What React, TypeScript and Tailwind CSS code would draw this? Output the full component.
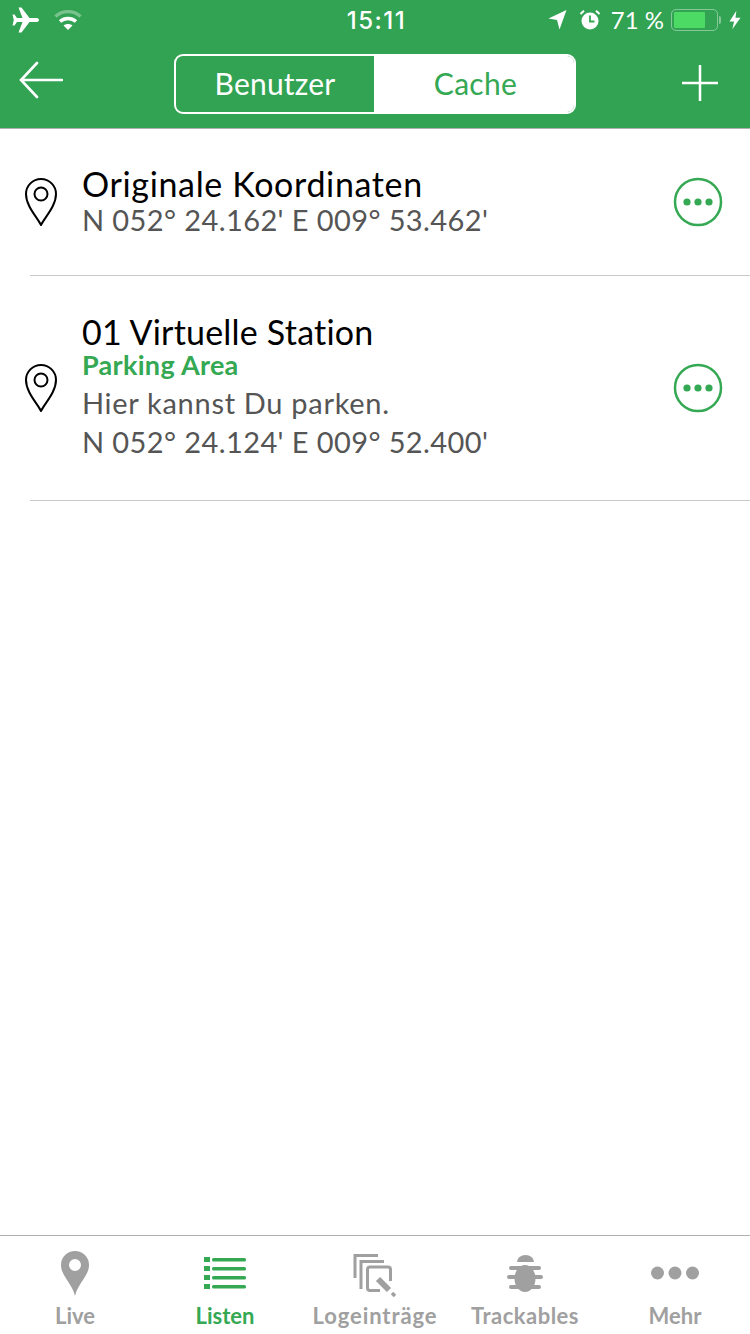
import React from "react";

const font = "font-['Lato','Open_Sans',sans-serif]";

const PinOutline = () => (
  <svg width="34" height="50" viewBox="0 0 34 50" fill="none" stroke="#000" strokeWidth="2">
    <path d="M17 48 C13 40 2 29 2 17 A15 15 0 0 1 32 17 C32 29 21 40 17 48 Z" strokeLinejoin="round" />
    <circle cx="17" cy="17" r="6.5" />
  </svg>
);

const MoreCircle = () => (
  <svg width="50" height="50" viewBox="0 0 50 50" fill="#34a853">
    <circle cx="25" cy="25" r="23" fill="none" stroke="#34a853" strokeWidth="2.5" />
    <circle cx="14" cy="25" r="3.6" />
    <circle cx="25" cy="25" r="3.6" />
    <circle cx="36" cy="25" r="3.6" />
  </svg>
);

const StatusBar = () => (
  <div className="flex h-[40px] items-center justify-between pl-[12px] pr-[9px] text-white">
    <div className="flex items-center gap-[14px]">
      <svg width="28" height="26" viewBox="0 0 28 26" fill="#fff">
        <path d="M27 13 C27 11.6 25.5 11 24 11 L17.5 11 L9.5 0.5 L6.5 0.5 L10.5 11 L5 11 L2.5 7.5 L0.5 7.5 L1.8 13 L0.5 18.5 L2.5 18.5 L5 15 L10.5 15 L6.5 25.5 L9.5 25.5 L17.5 15 L24 15 C25.5 15 27 14.4 27 13 Z" />
      </svg>
      <svg width="28" height="22" viewBox="0 0 28 22" fill="none" stroke="#fff" strokeWidth="3.4">
        <path d="M1.5 7.5 C8.5 1 19.5 1 26.5 7.5" strokeOpacity="0.35" />
        <path d="M6 12.5 C10.5 8.5 17.5 8.5 22 12.5" />
        <path d="M14 21 L9.5 16.5 C12 14.5 16 14.5 18.5 16.5 Z" fill="#fff" stroke="none" />
      </svg>
    </div>
    <div className="absolute top-[7px] left-[3px] right-0 text-center font-['Inter',sans-serif] text-[24px] leading-[28px] font-medium tracking-[1.5px]">15:11</div>
    <div className="flex items-center">
      <svg width="19" height="20" viewBox="0 0 18 20" fill="#fff" className="mr-[13px]">
        <path d="M18 0 L0 8.5 L8.5 10 L11 19.5 Z" />
      </svg>
      <svg width="20" height="20" viewBox="0 0 20 20" className="mr-[11px]">
        <circle cx="10" cy="11" r="8.5" fill="#fff" />
        <path d="M10 5.5 L10 11.5 L14.5 11.5" fill="none" stroke="#34a853" strokeWidth="1.8" />
        <path d="M0.5 4 L4 0.8 M19.5 4 L16 0.8" stroke="#fff" strokeWidth="2" />
      </svg>
      <span className={`${font} mr-[7px] text-[24px] leading-none`}>71 %</span>
      <div className="flex h-[22px] w-[47px] items-center rounded-[5px] border-[1.5px] border-white/40 p-[2px]">
        <div className="h-full w-[31px] rounded-[1px] bg-[#4cd964]" />
      </div>
      <div className="mr-[8px] ml-[1px] h-[8px] w-[2px] rounded-r-sm bg-white/40" />
      <svg width="12" height="20" viewBox="0 0 13 20" fill="#fff">
        <path d="M8 0 L0.5 11.5 L5.5 11.5 L3.5 20 L12.5 7.5 L7 7.5 Z" />
      </svg>
    </div>
  </div>
);

const NavBar = () => (
  <div className="flex h-[88px] items-start justify-between pt-[14px] pr-[32px] pl-[19px]">
    <svg width="44" height="38" viewBox="0 0 44 38" fill="none" stroke="#fff" strokeWidth="2.6" strokeLinecap="round" className="mt-[7px]">
      <path d="M43 19 L2 19 M18 2 L2 19 L18 36" />
    </svg>
    <div className={`${font} ml-[5px] flex h-[60px] w-[402px] overflow-hidden rounded-[9px] border-2 border-white text-[30px]`}>
      <div className="flex w-[198px] items-center justify-center pb-[2px] tracking-[0.2px] text-white">Benutzer</div>
      <div className="flex flex-1 items-center justify-center bg-white pb-[2px] pl-[3px] tracking-[0.3px] text-[#34a853]">Cache</div>
    </div>
    <svg width="36" height="36" viewBox="0 0 36 36" stroke="#fff" strokeWidth="2.5" className="mt-[11px]">
      <path d="M18 0 L18 36 M0 18 L36 18" />
    </svg>
  </div>
);

interface RowProps {
  title: string;
  subtitle?: string;
  description?: string;
  coords: string;
  className: string;
}

const Row: React.FC<RowProps> = ({ title, subtitle, description, coords, className }) => (
  <div className={`flex items-center pr-[27px] pl-[24px] ${className}`}>
    <PinOutline />
    <div className={`${font} ml-[24px] flex-1 ${subtitle ? "" : "pt-[2px]"}`}>
      <div className={`text-[34px] leading-[34px] text-black ${subtitle ? "tracking-[0.2px]" : "tracking-[0.65px]"}`}>{title}</div>
      {subtitle && <div className="text-[27px] leading-[32px] font-bold tracking-[0.3px] text-[#34a853]">{subtitle}</div>}
      {description && <div className="mt-[3px] text-[29px] leading-[38px] tracking-[0.7px] text-[#555]">{description}</div>}
      <div className={`text-[29px] leading-[38px] tracking-[0.4px] text-[#555] ${description ? "mt-[1px]" : ""}`}>{coords}</div>
    </div>
    <MoreCircle />
  </div>
);

const Tab = ({ label, labelClass, icon }: { label: string; labelClass: string; icon: React.ReactNode }) => (
  <div className="flex w-[150px] flex-col items-center">
    <div className="flex h-[48px] items-center justify-center">{icon}</div>
    <div className={`${font} mt-[6px] text-[22px] leading-[26px] font-bold whitespace-nowrap ${labelClass}`}>
      {label}
    </div>
  </div>
);

const TabBar = () => (
  <div className="flex h-[99px] shrink-0 border-t border-[#b0b0b0] bg-white pt-[13px]">
    <Tab
      label="Live"
      labelClass="text-[#a0a0a0]"
      icon={
        <svg width="30" height="46" viewBox="0 0 30 46" fill="#a0a0a0">
          <path fillRule="evenodd" d="M15 46 C12 33 1 26 1 15 A14 14 0 0 1 29 15 C29 26 18 33 15 46 Z M15 9 A6 6 0 1 0 15 21 A6 6 0 1 0 15 9 Z" />
        </svg>
      }
    />
    <Tab
      label="Listen"
      labelClass="text-[#34a853]"
      icon={
        <svg width="42" height="32" viewBox="0 0 42 32" fill="#34a853">
          <rect x="0" y="0" width="6" height="5" />
          <rect x="8" y="1" width="34" height="3.4" rx="1.5" />
          <rect x="0" y="9" width="6" height="5" />
          <rect x="8" y="10" width="34" height="3.4" rx="1.5" />
          <rect x="0" y="18" width="6" height="5" />
          <rect x="8" y="19" width="34" height="3.4" rx="1.5" />
          <rect x="0" y="27" width="6" height="5" />
          <rect x="8" y="28" width="34" height="3.4" rx="1.5" />
        </svg>
      }
    />
    <Tab
      label="Logeinträge"
      labelClass="tracking-[0.9px] text-[#a0a0a0]"
      icon={
        <svg width="44" height="44" viewBox="0 0 44 44" fill="none" stroke="#a0a0a0" strokeWidth="3" className="mt-[6px]">
          <path d="M25 1.5 L2 1.5 L2 24" />
          <path d="M31 7.5 L8 7.5 L8 35" />
          <path d="M27 36.5 L17 36.5 Q14.5 36.5 14.5 34 L14.5 15.5 Q14.5 13 17 13 L35 13 Q37.5 13 37.5 15.5 L37.5 27" />
          <path d="M25 25 L36 36" strokeWidth="6" />
          <path d="M39 39 L42 42" strokeWidth="3.5" />
        </svg>
      }
    />
    <Tab
      label="Trackables"
      labelClass="tracking-[0.5px] text-[#a0a0a0]"
      icon={
        <svg width="36" height="37" viewBox="0 0 36 37" fill="#a0a0a0">
          <path d="M10 7 A8.5 7 0 0 1 27 7 Z" />
          <ellipse cx="18" cy="23.5" rx="10.5" ry="13.5" />
          <rect x="2" y="11" width="32" height="4" rx="2" />
          <rect x="0" y="20" width="36" height="4" rx="2" />
          <rect x="2" y="30" width="32" height="4" rx="2" />
        </svg>
      }
    />
    <Tab
      label="Mehr"
      labelClass="text-[#a0a0a0]"
      icon={
        <svg width="48" height="14" viewBox="0 0 48 14" fill="#a0a0a0">
          <circle cx="6.5" cy="7" r="6.5" />
          <circle cx="24" cy="7" r="6.5" />
          <circle cx="41.5" cy="7" r="6.5" />
        </svg>
      }
    />
  </div>
);

export default function App() {
  return (
    <div className="flex h-[1334px] w-[750px] flex-col overflow-hidden bg-white">
      <div className="relative h-[129px] shrink-0 border-b border-[#b0b0b0] bg-[#32a353]">
        <StatusBar />
        <NavBar />
      </div>
      <div className="flex-1">
        <Row title="Originale Koordinaten" coords="N 052° 24.162' E 009° 53.462'" className="h-[146px]" />
        <div className="ml-[30px] h-px bg-[#c8c8c8]" />
        <Row
          title="01 Virtuelle Station"
          subtitle="Parking Area"
          description="Hier kannst Du parken."
          coords="N 052° 24.124' E 009° 52.400'"
          className="h-[224px]"
        />
        <div className="ml-[30px] h-px bg-[#c8c8c8]" />
      </div>
      <TabBar />
    </div>
  );
}
